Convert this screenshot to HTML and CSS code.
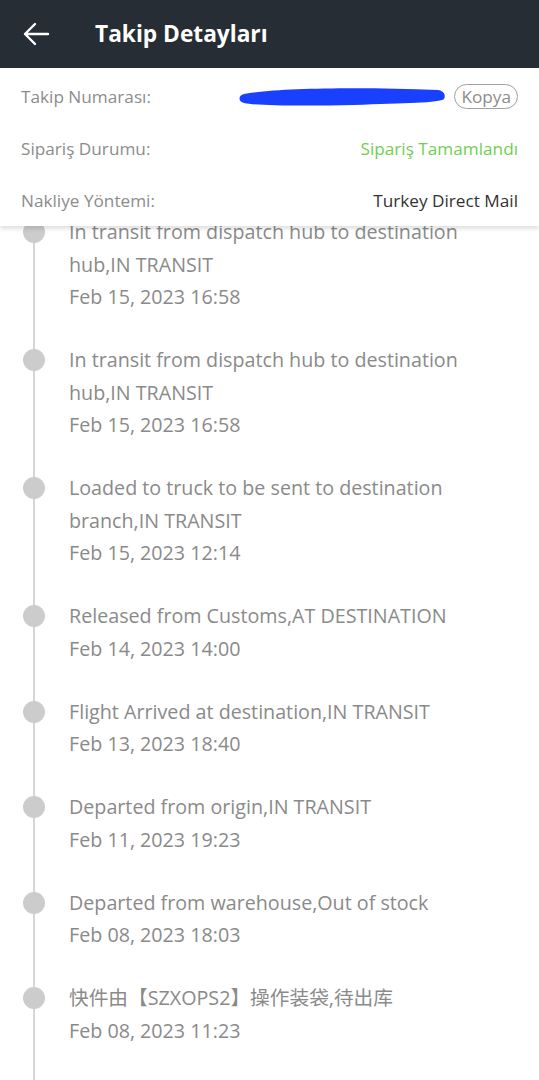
FILE: index.html
```html
<!DOCTYPE html>
<html>
	<head>
		<meta charset="UTF-8">
		<title>Takip Detayları</title>
		<link rel="stylesheet" href="styles.css">
	</head>
	<body>
		<div class="topbar">
			<svg class="back" width="28" height="24" viewBox="0 0 28 24">
				<path d="M26 12H3M13 2L3 12l10 10" fill="none" stroke="#fff" stroke-width="2.4" stroke-linecap="round" stroke-linejoin="round"/>
			</svg>
			<h1 class="title">Takip Detayları</h1>
		</div>
		<!--takip bilgileri-->
		<div class="info">
			<div class="row">
				<span class="label">Takip Numarası:</span>
				<div class="value">
					<svg class="scribble" width="210" height="24" viewBox="0 0 210 24">
						<path d="M6 10C40 4 120 3 200 6c6 1 8 5 6 9-4 4-40 4-90 6C70 22 20 22 6 19c-6-1-6-8 0-9z" fill="#1a40ff"/>
					</svg>
					<span class="copy">Kopya</span>
				</div>
			</div>
			<div class="row">
				<span class="label">Sipariş Durumu:</span>
				<span class="status">Sipariş Tamamlandı</span>
			</div>
			<div class="row">
				<span class="label">Nakliye Yöntemi:</span>
				<span class="method">Turkey Direct Mail</span>
			</div>
		</div>
		<!--takip listesi-->
		<ul class="track">
			<li><p>In transit from dispatch hub to destination hub,IN TRANSIT</p><p>Feb 15, 2023 16:58</p></li>
			<li><p>In transit from dispatch hub to destination hub,IN TRANSIT</p><p>Feb 15, 2023 16:58</p></li>
			<li><p>Loaded to truck to be sent to destination branch,IN TRANSIT</p><p>Feb 15, 2023 12:14</p></li>
			<li><p>Released from Customs,AT DESTINATION</p><p>Feb 14, 2023 14:00</p></li>
			<li><p>Flight Arrived at destination,IN TRANSIT</p><p>Feb 13, 2023 18:40</p></li>
			<li><p>Departed from origin,IN TRANSIT</p><p>Feb 11, 2023 19:23</p></li>
			<li><p>Departed from warehouse,Out of stock</p><p>Feb 08, 2023 18:03</p></li>
			<li><p>快件由【SZXOPS2】操作装袋,待出库</p><p>Feb 08, 2023 11:23</p></li>
		</ul>
	</body>
</html>
```

FILE: styles.css
```css
*{
	margin: 0px;
	padding: 0px;
}
ul,li{
	list-style: none;
}
html,body{
	height: 1080px;
	overflow: hidden;
}
body{
	font-family: "Open Sans", "Noto Sans CJK SC", sans-serif;
	background: #fff;
}
.topbar{
	height: 68px;
	background: #262d35;
	display: flex;
	align-items: center;
	padding-left: 22px;
}
.topbar .back{
	display: block;
}
.topbar .title{
	color: #fff;
	font-size: 22.7px;
	font-weight: 700;
	margin-left: 45px;
	margin-top: -1px;
}
.info{
	position: relative;
	z-index: 2;
	background: #fff;
	padding: 2px 21px 0px 21px;
	height: 156px;
	box-shadow: 0px 3px 4px rgba(0,0,0,0.12);
}
.info .row{
	height: 52px;
	display: flex;
	align-items: center;
	justify-content: space-between;
	font-size: 17.2px;
}
.info .label{
	color: #8c8c8c;
}
.info .value{
	display: flex;
	align-items: center;
}
.info .scribble{
	display: block;
	margin-right: 6px;
}
.info .copy{
	color: #8c8c8c;
	border: 1px solid #a0a0a0;
	border-radius: 13px;
	padding: 0px 6px;
	line-height: 23px;
}
.info .status{
	color: #6fcf4f;
}
.info .method{
	color: #333;
}
.track{
	margin-top: -10px;
	padding-left: 69px;
	padding-right: 28px;
	position: relative;
}
.track li{
	position: relative;
	padding-bottom: 30.5px;
	font-size: 19.7px;
	line-height: 32.5px;
	color: #8a8a8a;
}
.track li:before{
	content: "";
	position: absolute;
	left: -46px;
	top: 5px;
	width: 22px;
	height: 22px;
	border-radius: 50%;
	background: #cccccc;
}
.track li:after{
	content: "";
	position: absolute;
	left: -36px;
	top: 16px;
	bottom: -16px;
	width: 2px;
	background: #d6d6d6;
	z-index: -1;
}
```
